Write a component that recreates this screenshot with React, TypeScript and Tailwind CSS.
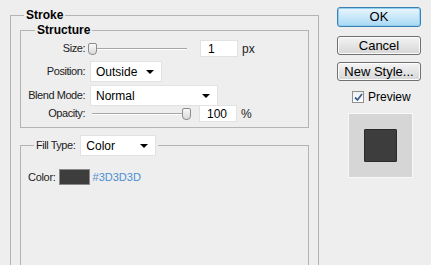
import React from 'react';

const font = { fontFamily: '"Liberation Sans", Arial, sans-serif' };

// Win7-ish push button
const Button = ({ label, focused }: { label: string; focused?: boolean }) => (
  <div
    className={
      focused
        ? 'flex h-[20px] w-[84px] items-center justify-center rounded-[3px] border border-[#3c7fb1] bg-gradient-to-b from-[#eaf6fd] to-[#a7d9f5] text-[13px] text-black shadow-[inset_0_0_0_1px_#8fd0f2]'
        : 'flex h-[19px] w-[84px] items-center justify-center rounded-[3px] border border-[#707070] bg-gradient-to-b from-[#f4f4f4] to-[#d6d6d6] text-[13px] text-black shadow-[inset_0_0_0_1px_#fcfcfc]'
    }
  >
    {label}
  </div>
);

const Select = ({ value, width }: { value: string; width: string }) => (
  <div className={`flex h-[21px] ${width} items-center justify-between border border-[#e2e2e2] bg-white pl-[5px] pr-[7px] text-[12px] text-black`}>
    <span>{value}</span>
    <span className="h-0 w-0 border-x-[4px] border-t-[4px] border-x-transparent border-t-black" />
  </div>
);

const Slider = ({ thumbAt }: { thumbAt: 'start' | 'end' }) => (
  <div className="relative h-[12px] w-[103px]">
    <div className="absolute left-[4px] right-[4px] top-[5px] h-[2px] border-t border-b border-t-[#a6a6a6] border-b-white" />
    <div
      className={`absolute top-0 h-[12px] w-[9px] rounded-b-[4px] rounded-t-[2px] border border-[#8c8c8c] bg-gradient-to-b from-[#f8f8f8] to-[#dadada] ${
        thumbAt === 'start' ? 'left-0' : 'right-0'
      }`}
    />
  </div>
);

const NumInput = ({ value }: { value: string }) => (
  <div className="flex h-[17px] w-[38px] items-center border border-[#e2e2e2] bg-white pl-[7px] text-[12px] text-black">
    {value}
  </div>
);

const Label = ({ children }: { children: React.ReactNode }) => (
  <span className="w-[65px] pr-[1px] text-right tracking-[-0.45px]">{children}</span>
);

export default function App() {
  return (
    <div className="flex h-[265px] w-[431px] overflow-hidden bg-[#eeeeee] text-[11px] text-[#222]" style={font}>
      {/* left: settings */}
      <div className="pl-[10px] pt-[6px]">
        <fieldset className="h-[300px] w-[309px] border border-[#b4b4b4] px-[9px]">
          <legend className="ml-[4px] px-[2px] text-[12px] font-bold text-black">Stroke</legend>

          <fieldset className="mt-[-3px] h-[107px] border border-[#b4b4b4]">
            <legend className="ml-[14px] px-[2px] text-[12px] font-bold text-black">Structure</legend>
            <div className="flex flex-col">
              <div className="mt-[1px] flex h-[17px] items-center">
                <Label>Size:</Label>
                <div className="ml-[2px]"><Slider thumbAt="start" /></div>
                <div className="ml-[9px]"><NumInput value="1" /></div>
                <span className="ml-[4px] text-[12px]">px</span>
              </div>
              <div className="mt-[4px] flex items-center">
                <Label>Position:</Label>
                <div className="ml-[4px]"><Select value="Outside" width="w-[72px]" /></div>
              </div>
              <div className="mt-[3px] flex items-center">
                <Label>Blend Mode:</Label>
                <div className="ml-[4px]"><Select value="Normal" width="w-[128px]" /></div>
              </div>
              <div className="mt-[-1px] flex h-[17px] items-center">
                <Label>Opacity:</Label>
                <div className="ml-[2px]"><Slider thumbAt="end" /></div>
                <div className="ml-[8px]"><NumInput value="100" /></div>
                <span className="ml-[4px] text-[12px]">%</span>
              </div>
            </div>
          </fieldset>

          <fieldset className="mt-[7px] h-[200px] border border-[#b4b4b4]">
            <legend className="ml-[13px] flex items-center px-[2px]">
              <span className="mr-[5px] tracking-[-0.45px]">Fill Type:</span>
              <Select value="Color" width="w-[76px]" />
            </legend>
            <div className="mt-[13px] flex items-center pl-[7px]">
              <span className="tracking-[-0.3px]">Color:</span>
              <span className="ml-[3px] h-[16px] w-[31px] border border-[#8a8a8a] bg-[#3d3d3d]" />
              <span className="ml-[3px] text-[#4b8fd6]">#3D3D3D</span>
            </div>
          </fieldset>
        </fieldset>
      </div>

      {/* right: buttons and preview */}
      <div className="ml-[18px] flex flex-col pt-[7px]">
        <Button label="OK" focused />
        <div className="mt-[9px]"><Button label="Cancel" /></div>
        <div className="mt-[7px]"><Button label="New Style..." /></div>
        <div className="mt-[7px] flex items-center pl-[15px]">
          <span className="flex h-[12px] w-[12px] items-center justify-center border border-[#8e8f8f] bg-gradient-to-b from-[#f0f0f0] to-white">
            <svg width="9" height="9" viewBox="0 0 9 9">
              <path d="M1 4.5 L3.5 7 L8 1" fill="none" stroke="#3b5f9a" strokeWidth="1.8" />
            </svg>
          </span>
          <span className="ml-[4px] text-[12px] text-black">Preview</span>
        </div>
        <div className="ml-[11px] mt-[7px] flex h-[65px] w-[65px] items-center justify-center border border-[#f8f8f8] bg-[#d6d6d6]">
          <div className="h-[33px] w-[33px] rounded-[1px] border border-[#2a2a2a] bg-[#3d3d3d]" />
        </div>
      </div>
    </div>
  );
}
